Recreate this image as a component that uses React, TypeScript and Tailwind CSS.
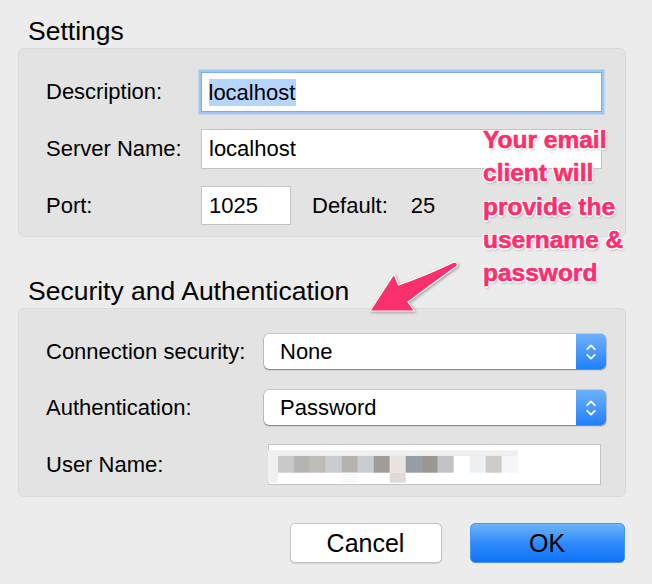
import React from "react";

const blocks: [number, string][] = [
  [278.3, "#c8c9c9"],
  [294, "#b4b4b5"],
  [310, "#bfbbb7"],
  [326, "#c9ccd0"],
  [342, "#b6b2af"],
  [358, "#c9cdd1"],
  [374, "#a19c97"],
  [390, "#e8e4e1"],
  [406, "#959ca5"],
  [422, "#9b9792"],
  [438, "#c1c3c6"],
  [454, "#ffffff"],
  [470, "#eef1f4"],
  [486, "#cdcac7"],
  [502, "#f4f6f9"],
];

function Pixelated() {
  const ox = 268.3;
  const oy = 444.3;
  return (
    <svg width="252" height="38" viewBox="0 0 252 38" className="block">
      <rect x={0} y={447.7 - oy} width={518 - ox} height={5.6} fill="#eeeeee" />
      <rect x={0} y={447.7 - oy} width={10} height={32.3} fill="#f0f0f0" />
      {blocks.map(([x, c]) => (
        <rect key={x} x={x - ox} y={453.3 - oy} width={16.2} height={16.7} fill={c} />
      ))}
      <rect x={342 - ox} y={470 - oy} width={16} height={10} fill="#f7f9fd" />
      <rect x={390 - ox} y={470 - oy} width={16} height={10} fill="#dfdad6" />
    </svg>
  );
}

function Select({ value }: { value: string }) {
  return (
    <div className="flex h-[35px] w-[342px] rounded-[5px] bg-white shadow-[0_0_0_0.5px_rgba(0,0,0,0.22),0_1px_1.5px_rgba(0,0,0,0.4)]">
      <div className="flex flex-1 items-center pl-[16px] text-[22px] leading-none">{value}</div>
      <div className="flex w-[30px] items-center justify-center rounded-r-[5px] bg-linear-to-b from-[#6cb1fb] to-[#1c80fa]">
        <svg width="12" height="20" viewBox="0 0 12 20">
          <path d="M2.2 7.2 L6 3.4 L9.8 7.2" stroke="#fff" strokeWidth="1.8" fill="none" strokeLinecap="round" strokeLinejoin="round" />
          <path d="M2.2 12.8 L6 16.6 L9.8 12.8" stroke="#fff" strokeWidth="1.8" fill="none" strokeLinecap="round" strokeLinejoin="round" />
        </svg>
      </div>
    </div>
  );
}

export default function App() {
  return (
    <div className="relative flex h-[584px] w-[652px] flex-col overflow-hidden bg-[#ececec] pl-[18px] pr-[26px] font-['Liberation_Sans',Arial,sans-serif] text-black">
      <h2 className="mt-[16px] pl-[10px] text-[26.5px] leading-[30px] font-normal">Settings</h2>
      <div className="mt-[2px] flex h-[189px] flex-col gap-[17px] rounded-[6px] border border-[#d9d9d9] bg-[#e3e3e3] pl-[27px] pt-[23px]">
        <div className="flex items-center">
          <div className="w-[155px] text-[22px] leading-none">Description:</div>
          <div className="flex h-[40px] w-[401px] items-center border border-[#7aaee6] bg-white pl-[6.5px] shadow-[0_0_0_2.5px_#9fc5f1]">
            <span className="bg-[#b4d5fe] pr-[1px] text-[22px] leading-[27px]">localhost</span>
          </div>
        </div>
        <div className="flex items-center">
          <div className="w-[155px] text-[22px] leading-none">Server Name:</div>
          <div className="flex h-[40px] w-[401px] items-center border border-[#c4c4c4] bg-white pl-[7px] text-[22px] leading-none">
            localhost
          </div>
        </div>
        <div className="flex items-center">
          <div className="w-[155px] text-[22px] leading-none">Port:</div>
          <div className="flex h-[39px] w-[90px] items-center border border-[#c4c4c4] bg-white pl-[7px] text-[22px] leading-none">
            1025
          </div>
          <div className="ml-[21px] text-[22px] leading-none">Default:</div>
          <div className="ml-[23px] text-[22px] leading-none">25</div>
        </div>
      </div>

      <h2 className="mt-[39px] pl-[10px] text-[26.5px] leading-[30px] font-normal">Security and Authentication</h2>
      <div className="mt-[2px] flex h-[189px] flex-col rounded-[6px] border border-[#d9d9d9] bg-[#e3e3e3] pl-[27px] pt-[25px]">
        <div className="flex items-center">
          <div className="w-[218px] text-[22px] leading-none">Connection security:</div>
          <Select value="None" />
        </div>
        <div className="mt-[21px] flex items-center">
          <div className="w-[218px] text-[22px] leading-none">Authentication:</div>
          <Select value="Password" />
        </div>
        <div className="mt-[19px] flex items-center">
          <div className="w-[222px] text-[22px] leading-none">User Name:</div>
          <div className="h-[41px] w-[333px] border border-[#c4c4c4] bg-white pt-[2.4px]">
            <div className="-ml-[1px]">
              <Pixelated />
            </div>
          </div>
        </div>
      </div>

      <div className="mt-[26px] flex justify-end gap-[28px] pr-[1.5px]">
        <button className="flex h-[40px] w-[152px] items-center justify-center rounded-[5px] border border-[#c2c2c2] bg-white text-[25px] leading-none shadow-[0_1px_1px_rgba(0,0,0,0.12)]">
          Cancel
        </button>
        <button className="flex h-[40px] w-[155px] items-center justify-center rounded-[5px] border border-[#4a95f2] bg-linear-to-b from-[#6db2fc] via-[#2e8bfb] to-[#0d72fa] text-[25px] leading-none">
          OK
        </button>
      </div>

      {/* Annotation arrow */}
      <svg
        className="absolute left-[355px] top-[252px] drop-shadow-[1px_1.5px_1.5px_rgba(0,0,0,0.35)]"
        width="115"
        height="68"
        viewBox="355 252 115 68"
      >
        <path
          d="M370 311 L394 274 L398.5 285 Q425 276 453.5 262.3 Q458.5 261.5 457 266 Q432 284 408 302 L414.5 311 Z"
          fill="#fc2f6d"
          stroke="#ffffff"
          strokeWidth="1.2"
          strokeLinejoin="round"
        />
      </svg>

      {/* Annotation text */}
      <div className="absolute left-[483px] top-[123px] text-[24.5px] leading-[33.3px] font-bold text-[#fc2f6d] [-webkit-text-stroke:0.6px_#fc2f6d] [text-shadow:1.5px_0_0_#fff,-1.5px_0_0_#fff,0_1.5px_0_#fff,0_-1.5px_0_#fff,1.1px_1.1px_0_#fff,-1.1px_-1.1px_0_#fff,1.1px_-1.1px_0_#fff,-1.1px_1.1px_0_#fff,1px_2px_2.5px_rgba(0,0,0,0.35)]">
        <div>Your email</div>
        <div>client will</div>
        <div>provide the</div>
        <div>username &amp;</div>
        <div>password</div>
      </div>
    </div>
  );
}
